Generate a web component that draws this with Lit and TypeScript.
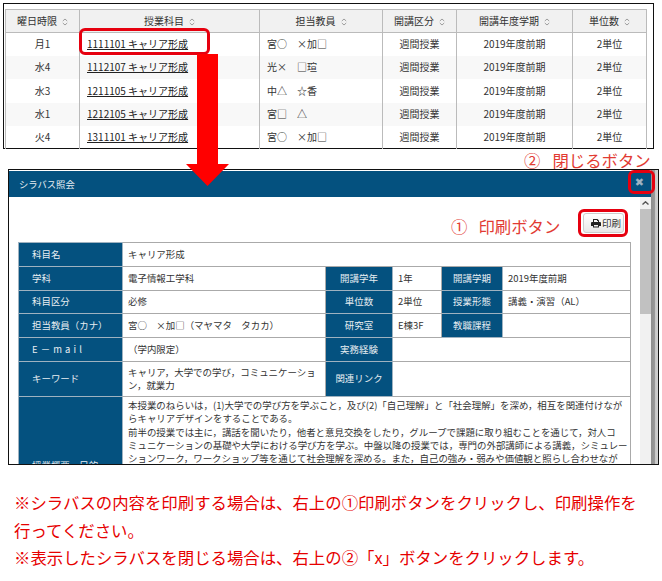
import { LitElement, html, css } from "lit";
import { customElement } from "lit/decorators.js";

const sort = html`<svg class="sort" width="6" height="8" viewBox="0 0 6 8"><path d="M.8 3 3 1l2.2 2M.8 5 3 7l2.2-2" fill="none" stroke="#888" stroke-width=".8"/></svg>`;

const heads = ["曜日時限", "授業科目", "担当教員", "開講区分", "開講年度学期", "単位数"];
const widths = [74, 180, 123, 74, 116, 74];
const rows = [
  ["月1", "1111101 キャリア形成", "宮○　×加□"],
  ["水4", "1112107 キャリア形成", "光×　□瑄"],
  ["水3", "1211105 キャリア形成", "中△　☆香"],
  ["水1", "1212105 キャリア形成", "宮□　△"],
  ["火4", "1311101 キャリア形成", "宮○　×加□"],
];

@customElement("app-root")
export class AppRoot extends LitElement {
  static styles = css`
    :host {
      display: block;
      position: relative;
      width: 662px;
      height: 581px;
      overflow: hidden;
      background: #fff;
      font-family: "Noto Sans CJK JP", "Noto Sans", sans-serif;
      color: #333;
    }
    .list {
      box-sizing: border-box;
      width: 651px;
      height: 146px;
      margin: 3px 0 0 3px;
      padding: 5px 0 0 1px;
      border: 1px solid #111;
    }
    table { border-collapse: collapse; table-layout: fixed; }
    .courses { width: 641px; font-size: 10px; }
    .courses th, .courses td {
      padding: 0 0 1px;
      height: 22px;
      text-align: center;
      font-weight: 400;
      border-left: 1px solid #bbb;
      white-space: nowrap;
      line-height: 12px;
    }
    .courses th {
      height: 21px;
      background: #f1f1f1;
      border-top: 1px solid #bbb;
      border-bottom: 1px solid #bbb;
    }
    .courses tbody tr:nth-child(3) td { height: 23px; }
    .courses tr > :last-child { border-right: 1px solid #bbb; }
    .courses tbody tr:nth-child(even) td { background: #f8f8f8; }
    .courses td.subject { text-align: left; padding-left: 7px; }
    .courses td.teacher { text-align: left; padding-left: 7px; }
    .courses a { color: #222; text-decoration: underline; }
    .sort { margin-left: 5px; vertical-align: -1px; }

    .dialog {
      box-sizing: border-box;
      display: flex;
      flex-direction: column;
      width: 651px;
      height: 296px;
      margin: 20px 0 0 8px;
      border: 1px solid #111;
      overflow: hidden;
      background: linear-gradient(to left, #d2d2d2 0, #c6c6c6 3px, #9a9a9a 3px, #8e8e8e 7px, #fff 7px);
    }
    .title {
      flex: none;
      display: flex;
      align-items: center;
      justify-content: space-between;
      height: 26px;
      margin-top: 1px;
      margin-right: 7px;
      padding: 0 7px 1px 10px;
      box-sizing: border-box;
      background: #04517f;
      color: #e8eef2;
      font-size: 9.3px;
    }
    .x { color: #9db3c2; font-size: 11px; font-weight: 700; font-family: "DejaVu Sans", sans-serif; margin-top: -3px; }
    .frame { flex: 1; min-height: 0; display: flex; padding-right: 7px; }
    .body {
      flex: 1;
      min-width: 0;
      background: #fff;
      padding: 12px 10px 0 9px;
      overflow: hidden;
    }
    .tools { display: flex; justify-content: flex-end; height: 33px; padding-right: 6px; }
    .print {
      box-sizing: border-box;
      display: flex;
      align-items: center;
      gap: 1px;
      width: 41px;
      height: 20px;
      margin-top: 4px;
      padding-left: 7px;
      border: 1px solid #ccc;
      border-radius: 3px;
      background: linear-gradient(#fff, #e8e8e8);
      font-size: 9.5px;
      color: #333;
    }
    .sheet { width: 612px; font-size: 9.45px; line-height: 13.3px; color: #333; }
    .sheet th, .sheet td { padding: 0; border: 1px solid #aaa; height: 24px; box-sizing: border-box; }
    .sheet th {
      background: #04517f;
      color: #e8eef2;
      font-weight: 400;
      border-color: #9fb2c0;
    }
    .sheet th.l { text-align: left; padding-left: 13px; }
    .sheet td { padding-left: 5px; }
    .sheet td.free { padding: 2px 5px; vertical-align: top; }
    .sheet tr.short > * { height: 23px; }
    .sheet tr.tall > * { height: 35px; }
    .sheet tr.long > * { height: 138px; }
    .sheet td.free div { white-space: nowrap; }
    .mail { letter-spacing: 3.1px; }
    .scroll {
      flex: none;
      display: flex;
      flex-direction: column;
      width: 11px;
      background: #f1f1f1;
    }
    .up { height: 12px; display: flex; justify-content: center; padding-top: 4px; box-sizing: border-box; }
    .thumb { height: 105px; background: #c1c1c1; }

    .notes {
      margin: 24px 0 0 14px;
      color: #e60000;
      font-size: 16.4px;
      line-height: 27.5px;
      white-space: nowrap;
    }

    .mark {
      position: absolute;
      box-sizing: border-box;
      border: 3px solid #e6000f;
      border-radius: 6px;
    }
    .mark.link { left: 79px; top: 28px; width: 131px; height: 27px; }
    .mark.close { left: 628px; top: 170px; width: 27px; height: 24px; }
    .mark.printer { left: 578px; top: 209px; width: 50px; height: 28px; }
    .arrow { position: absolute; left: 186px; top: 54px; }
    .note {
      position: absolute;
      color: #e23b33;
      font-size: 16.4px;
      line-height: 20px;
      white-space: nowrap;
    }
    .note.one { left: 451px; top: 216px; }
    .note.two { left: 524px; top: 150px; }
    .gap { margin-left: 11px; }
    .note.two .gap { margin-left: 12px; }
  `;

  render() {
    return html`
      <div class="list">
        <table class="courses">
          <colgroup>${widths.map((w) => html`<col style="width:${w}px" />`)}</colgroup>
          <thead><tr>${heads.map((h) => html`<th>${h}${sort}</th>`)}</tr></thead>
          <tbody>
            ${rows.map(
              (r) => html`<tr>
                <td>${r[0]}</td>
                <td class="subject"><a href="#">${r[1]}</a></td>
                <td class="teacher">${r[2]}</td>
                <td>週間授業</td>
                <td>2019年度前期</td>
                <td>2単位</td>
              </tr>`
            )}
          </tbody>
        </table>
      </div>

      <div class="dialog">
        <div class="title"><span>シラバス照会</span><span class="x">✖</span></div>
        <div class="frame">
          <div class="body">
            <div class="tools">
              <div class="print">
                <svg width="10" height="10" viewBox="0 0 10 10"><path d="M2 4V1h4.500L8 2.400V4h1a1 1 0 0 1 1 1v3H8v1.500H2V8H0V5a1 1 0 0 1 1-1zm1 0h4V3H6V2H3zm0 3v1.600h4V7z" fill="#222" fill-rule="evenodd"/></svg>
                <span>印刷</span>
              </div>
            </div>
            <table class="sheet">
              <colgroup>
                <col style="width:104px" /><col style="width:203px" /><col style="width:67px" />
                <col style="width:49px" /><col style="width:61px" /><col style="width:128px" />
              </colgroup>
              <tr><th class="l">科目名</th><td colspan="5">キャリア形成</td></tr>
              <tr><th class="l">学科</th><td>電子情報工学科</td><th>開講学年</th><td>1年</td><th>開講学期</th><td>2019年度前期</td></tr>
              <tr class="short"><th class="l">科目区分</th><td>必修</td><th>単位数</th><td>2単位</td><th>授業形態</th><td>講義・演習（AL）</td></tr>
              <tr><th class="l">担当教員（カナ）</th><td>宮○　×加□（マヤマタ　タカカ）</td><th>研究室</th><td>E棟3F</td><th>教職課程</th><td></td></tr>
              <tr><th class="l mail">E－mail</th><td>（学内限定）</td><th>実務経験</th><td colspan="3"></td></tr>
              <tr class="tall"><th class="l">キーワード</th><td>キャリア，大学での学び，コミュニケーショ<br />ン，就業力</td><th>関連リンク</th><td colspan="3"></td></tr>
              <tr class="long">
                <th class="l">授業概要・目的</th>
                <td class="free" colspan="5">
                  <div>本授業のねらいは，(1)大学での学び方を学ぶこと，及び(2)「自己理解」と「社会理解」を深め，相互を関連付けなが</div>
                  <div>らキャリアデザインをすることである。</div>
                  <div>前半の授業では主に，講話を聞いたり，他者と意見交換をしたり，グループで課題に取り組むことを通じて，対人コ</div>
                  <div>ミュニケーションの基礎や大学における学び方を学ぶ。中盤以降の授業では，専門の外部講師による講義，シミュレー</div>
                  <div>ションワーク，ワークショップ等を通じて社会理解を深める。また，自己の強み・弱みや価値観と照らし合わせなが</div>
                </td>
              </tr>
            </table>
          </div>
          <div class="scroll">
            <div class="up"><svg width="7" height="4" viewBox="0 0 7 4"><path d="M.5 3.500 3.500.8l3 2.700" fill="none" stroke="#555" stroke-width="1.400"/></svg></div>
            <div class="thumb"></div>
          </div>
        </div>
      </div>

      <div class="notes">
        <div>※シラバスの内容を印刷する場合は、右上の①印刷ボタンをクリックし、印刷操作を</div>
        <div>行ってください。</div>
        <div>※表示したシラバスを閉じる場合は、右上の②「x」ボタンをクリックします。</div>
      </div>

      <div class="mark link"></div>
      <div class="mark close"></div>
      <div class="mark printer"></div>
      <svg class="arrow" width="43" height="132" viewBox="0 0 43 132"><path d="M11 0h21v110h11L21.500 132 0 110h11z" fill="#f00"/></svg>
      <div class="note one">①<span class="gap">印刷ボタン</span></div>
      <div class="note two">②<span class="gap">閉じるボタン</span></div>
    `;
  }
}
